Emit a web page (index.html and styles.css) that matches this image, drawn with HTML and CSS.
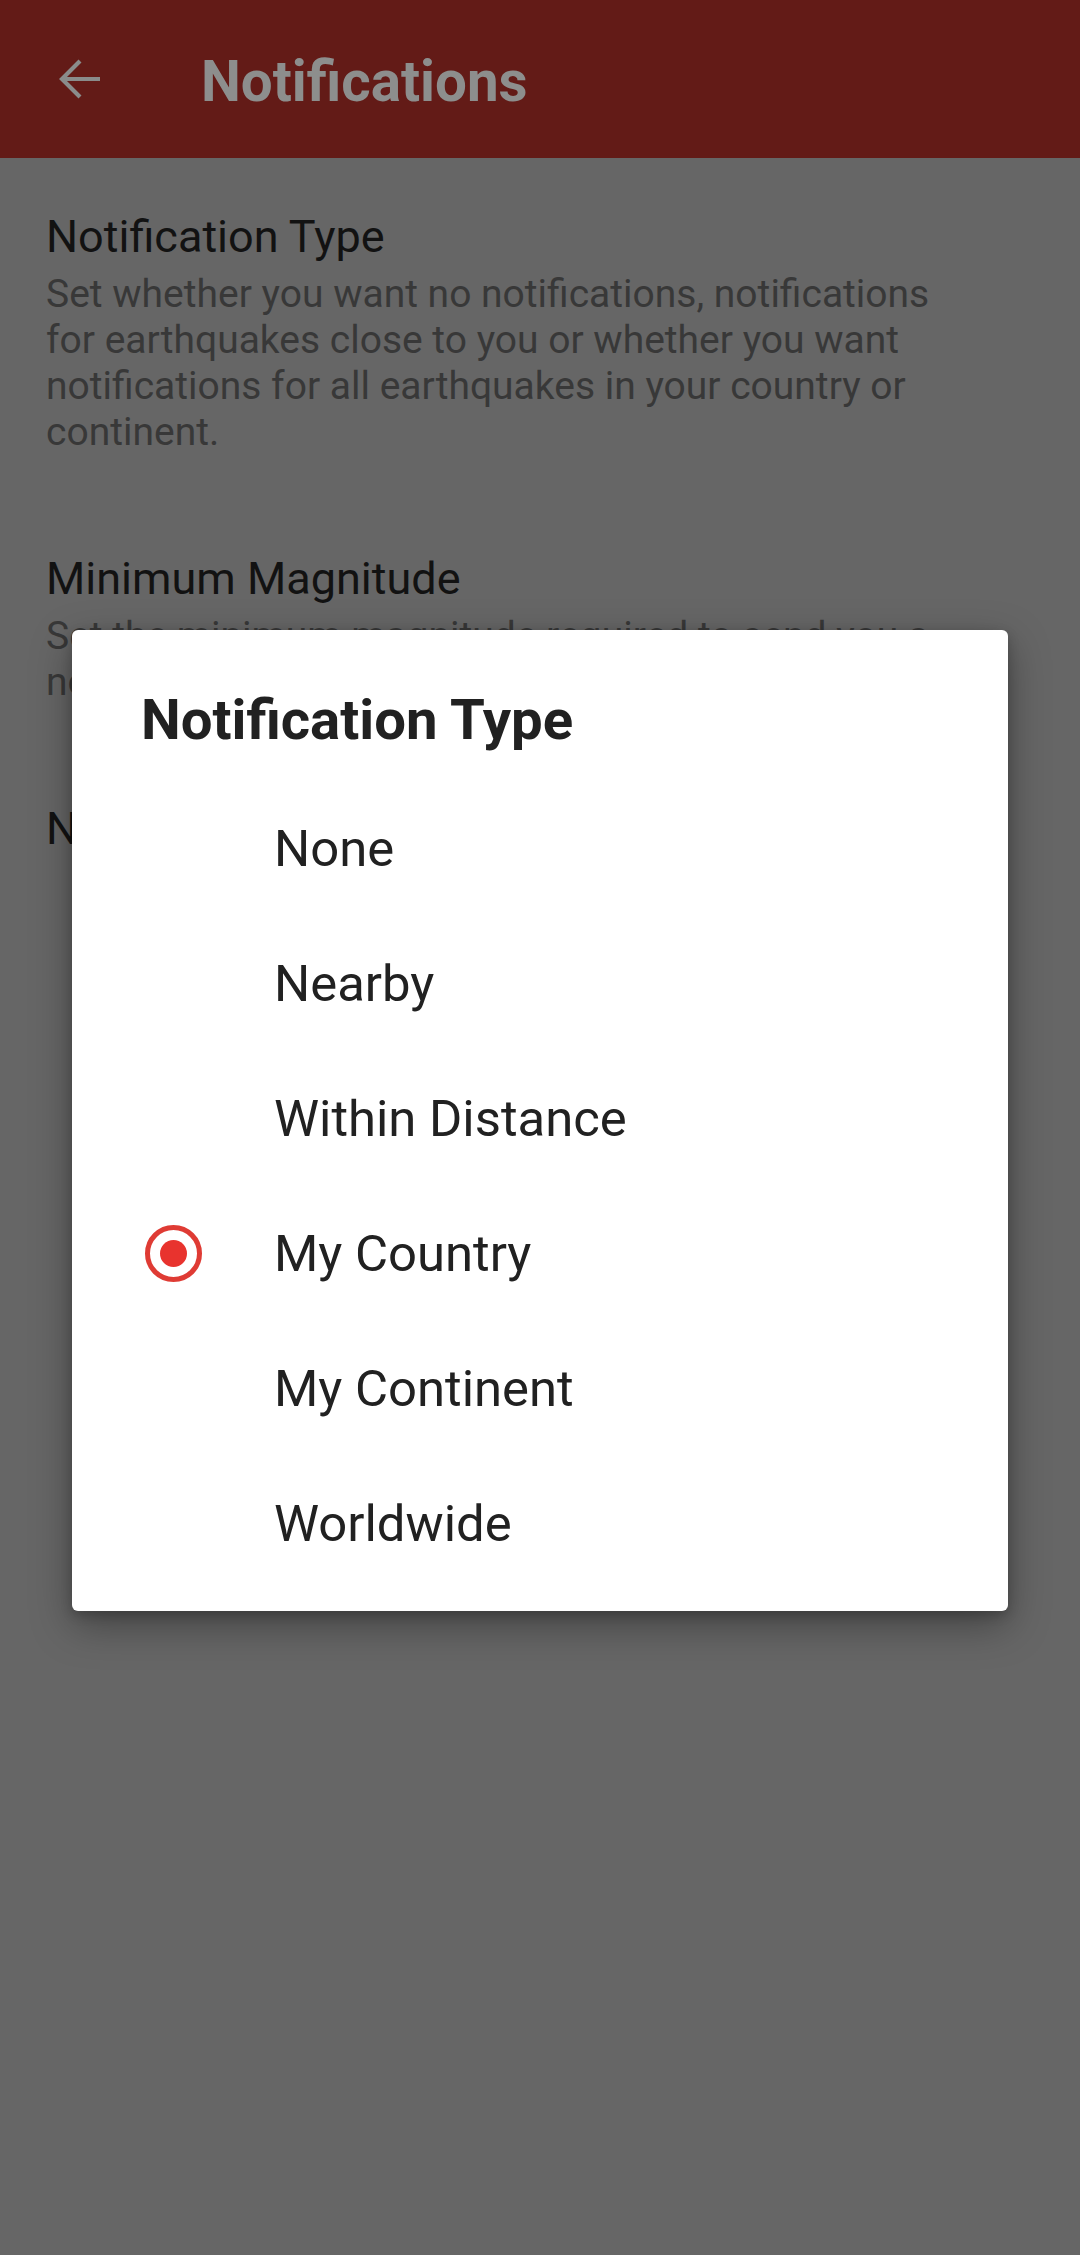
FILE: index.html
```html
<!DOCTYPE html>
<html lang="en">
<head>
<meta charset="utf-8">
<title>Notifications</title>
<link rel="stylesheet" href="styles.css">
</head>
<body>
<div class="screen">
  <header class="toolbar">
    <span class="back">
      <svg width="44" height="44" viewBox="0 0 44 44" aria-hidden="true">
        <path d="M42 22H4M22 4L4 22l18 18" fill="none" stroke="#8a8c8b" stroke-width="4.2" stroke-linecap="butt" stroke-linejoin="miter"/>
      </svg>
    </span>
    <h1 class="toolbar-title">Notifications</h1>
  </header>

  <main class="prefs">
    <div class="pref">
      <div class="pref-title">Notification Type</div>
      <div class="pref-summary">Set whether you want no notifications, notifications<br>for earthquakes close to you or whether you want<br>notifications for all earthquakes in your country or<br>continent.</div>
    </div>
    <div class="pref">
      <div class="pref-title">Minimum Magnitude</div>
      <div class="pref-summary">Set the minimum magnitude required to send you a<br>notification.</div>
    </div>
    <div class="pref">
      <div class="pref-title">Notification Sound</div>
    </div>
  </main>

  <div class="dialog" role="dialog">
    <h2 class="dialog-title">Notification Type</h2>
    <ul class="options">
      <li class="option"><span class="radio"></span><span class="label">None</span></li>
      <li class="option"><span class="radio"></span><span class="label">Nearby</span></li>
      <li class="option"><span class="radio"></span><span class="label">Within Distance</span></li>
      <li class="option"><span class="radio checked"></span><span class="label">My Country</span></li>
      <li class="option"><span class="radio"></span><span class="label">My Continent</span></li>
      <li class="option"><span class="radio"></span><span class="label">Worldwide</span></li>
    </ul>
  </div>
</div>
</body>
</html>
```

FILE: styles.css
```css
* { box-sizing: border-box; }

html, body {
  margin: 0;
  padding: 0;
  background: #666666;
}

body {
  font-family: Roboto, "Noto Sans", "Liberation Sans", sans-serif;
}

.screen {
  position: relative;
  width: 1080px;
  height: 2255px;
  background: #666666;
  overflow: hidden;
}

.toolbar {
  height: 158px;
  background: #631b17;
  display: flex;
  align-items: center;
}

.back {
  width: 44px;
  height: 44px;
  margin-left: 58px;
  display: flex;
}

.toolbar-title {
  margin: 6px 0 0 99px;
  font-size: 56.5px;
  font-weight: 700;
  color: #8d8e8d;
  letter-spacing: 0;
}

.prefs {
  padding-top: 4px;
}

.pref {
  padding: 49px 46px 49px 46px;
}

.pref-title {
  font-size: 45px;
  line-height: 52px;
  color: #121212;
}

.pref-summary {
  margin-top: 8px;
  font-size: 39px;
  line-height: 46px;
  color: #383838;
  white-space: nowrap;
}

.dialog {
  position: absolute;
  left: 72px;
  top: 630px;
  width: 936px;
  background: #ffffff;
  border-radius: 6px;
  box-shadow: 0 14px 40px rgba(0, 0, 0, 0.35), 0 4px 12px rgba(0, 0, 0, 0.2);
  padding: 58px 0 20px;
}

.dialog-title {
  margin: 0 0 29px 69px;
  font-size: 56.3px;
  line-height: 64px;
  font-weight: 700;
  color: #212121;
}

.options {
  list-style: none;
  margin: 0;
  padding: 0;
}

.option {
  height: 135px;
  display: flex;
  align-items: center;
  padding-left: 73px;
}

.radio {
  width: 57px;
  height: 57px;
  flex: none;
  border-radius: 50%;
  display: flex;
  align-items: center;
  justify-content: center;
}

.radio.checked {
  border: 5px solid #df3b34;
}

.radio.checked::after {
  content: "";
  width: 27px;
  height: 27px;
  border-radius: 50%;
  background: #e8332e;
}

.label {
  margin-left: 72px;
  font-size: 50.8px;
  color: #212121;
}
```
